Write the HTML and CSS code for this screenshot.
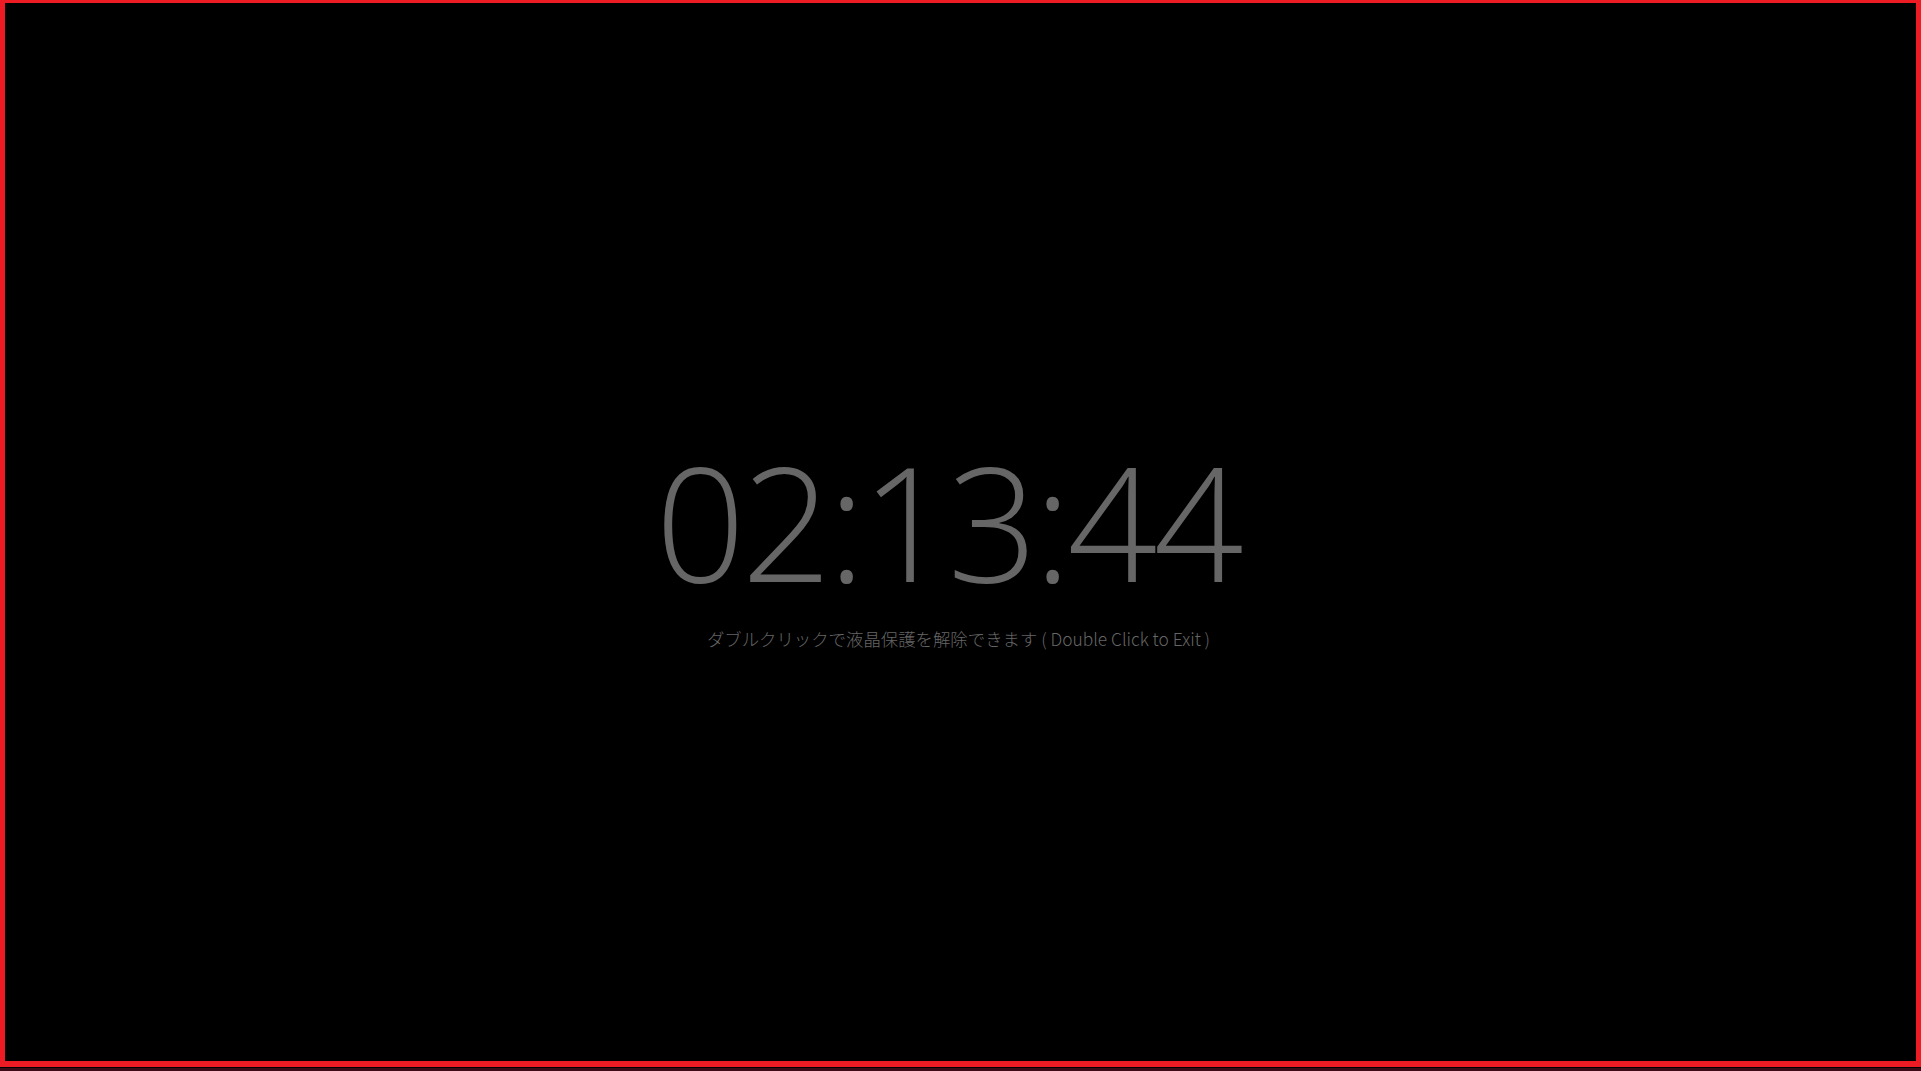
FILE: index.html
```html
<!DOCTYPE html>
<html lang="ja">
<head>
<meta charset="utf-8">
<title>Screen Saver Clock</title>
<link rel="stylesheet" href="styles.css">
</head>
<body>
<div class="frame">
  <div class="center">
    <div class="clock">02:13:44</div>
    <div class="hint">ダブルクリックで液晶保護を解除できます ( Double Click to Exit )</div>
  </div>
</div>
<div class="strip"></div>
</body>
</html>
```
FILE: styles.css
```css
html, body {
  margin: 0;
  padding: 0;
  background: #000;
  height: 100%;
  overflow: hidden;
}
body {
  display: flex;
  flex-direction: column;
}
.frame {
  flex: 1;
  box-sizing: border-box;
  border-style: solid;
  border-color: #ed1c24;
  border-width: 3px 5px 6px 5px;
  display: flex;
  align-items: center;
  justify-content: center;
  background: #000;
}
.strip {
  height: 3px;
  border-top: 1px solid #000;
  background: #3a0a16;
}
.center {
  display: flex;
  flex-direction: column;
  align-items: center;
  margin-top: 28px;
}
.clock {
  font-family: "Open Sans", "Noto Sans", sans-serif;
  font-weight: 350;
  font-size: 158px;
  line-height: 1;
  color: #666;
  letter-spacing: -4px;
  margin-right: 26px;
}
.hint {
  margin-top: 26px;
  margin-right: 4px;
  font-family: "Noto Sans CJK JP", "Noto Sans", sans-serif;
  font-weight: 300;
  font-size: 17.4px;
  color: #666;
}
```
